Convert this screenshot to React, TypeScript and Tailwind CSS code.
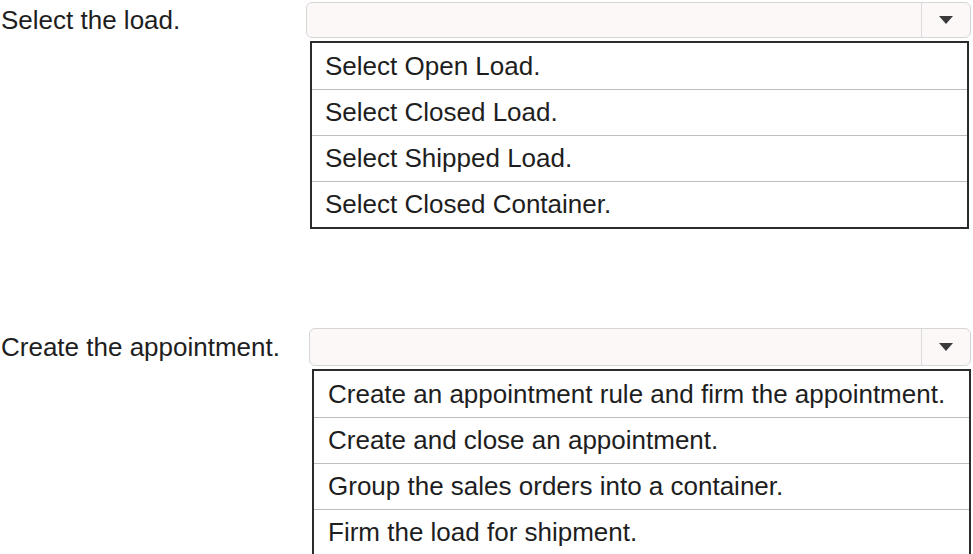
const loadOptions = [
  "Select Open Load.",
  "Select Closed Load.",
  "Select Shipped Load.",
  "Select Closed Container.",
];

const appointmentOptions = [
  "Create an appointment rule and firm the appointment.",
  "Create and close an appointment.",
  "Group the sales orders into a container.",
  "Firm the load for shipment.",
];

const SelectBox = ({ className }: { className: string }) => (
  <div className={`flex rounded-[6px] border border-[#d6d6d6] bg-[#fdf8f8] ${className}`}>
    <div className="flex-1" />
    <div className="w-[49px] border-l border-[#dcdcdc] flex items-center justify-center">
      <svg width="14" height="8" viewBox="0 0 14 8">
        <path d="M0 0H14L7 8Z" fill="#3a3a3a" />
      </svg>
    </div>
  </div>
);

const OptionList = ({ options, className, textPad }: { options: string[]; className: string; textPad: string }) => (
  <div className={`border-2 border-[#2b2b2b] bg-white ${className}`}>
    {options.map((option, i) => (
      <div
        key={option}
        className={`h-[46px] flex items-center whitespace-nowrap ${textPad} ${i > 0 ? "border-t border-[#bdbdbd]" : ""}`}
      >
        {option}
      </div>
    ))}
  </div>
);

export default function App() {
  return (
    <div className="w-[973px] h-[554px] overflow-hidden bg-white text-[#1e1e1e] text-[26px] [font-family:'Liberation_Sans',Arial,sans-serif]">
      <section className="flex pt-[2px]">
        <div className="w-[306px] h-[36px] pl-[1px] flex items-center whitespace-nowrap">Select the load.</div>
        <div className="w-[665px] flex flex-col">
          <SelectBox className="h-[36px]" />
          <OptionList options={loadOptions} className="mt-[3px] ml-[4px] w-[659px]" textPad="pl-[13px]" />
        </div>
      </section>

      <section className="flex mt-[99px]">
        <div className="w-[309px] h-[38px] pl-[1px] flex items-center whitespace-nowrap">Create the appointment.</div>
        <div className="w-[662px] flex flex-col">
          <SelectBox className="h-[38px]" />
          <OptionList options={appointmentOptions} className="mt-[3px] ml-[3px] w-[659px]" textPad="pl-[14px]" />
        </div>
      </section>
    </div>
  );
}
